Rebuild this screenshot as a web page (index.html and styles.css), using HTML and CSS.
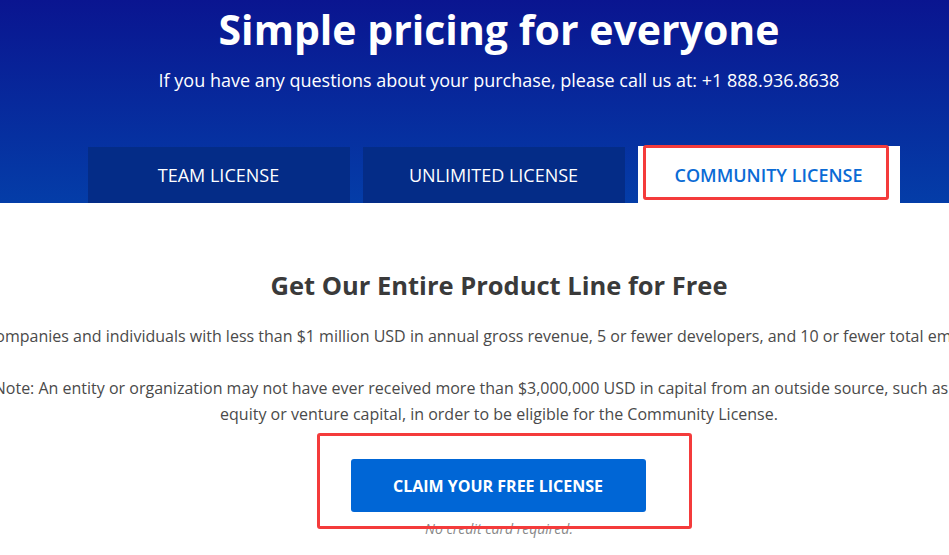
FILE: index.html
```html
<!DOCTYPE html>
<html>

<head>
  <meta charset="UTF-8">
  <meta name="viewport" content="width=device-width, initial-scale=1.0">
  <title>Pricing - Community License</title>
  <link rel="stylesheet" href="styles.css">
</head>

<body>
  <div class="page">
    <header class="hero">
      <h1>Simple pricing for everyone</h1>
      <p class="hero-sub">If you have any questions about your purchase, please call us at: +1 888.936.8638</p>

      <nav class="tabs">
        <a class="tab">TEAM LICENSE</a>
        <a class="tab">UNLIMITED LICENSE</a>
        <a class="tab active">COMMUNITY LICENSE<span class="mark mark-tab"></span></a>
      </nav>
    </header>

    <section class="community">
      <h2>Get Our Entire Product Line for Free</h2>
      <p>Companies and individuals with less than $1 million USD in annual gross revenue, 5 or fewer developers, and 10 or fewer total employees.</p>
      <p>Note: An entity or organization may not have ever received more than $3,000,000 USD in capital from an outside source, such as private equity or venture capital, in order to be eligible for the Community License.</p>

      <div class="cta">
        <a class="btn">CLAIM YOUR FREE LICENSE</a>
        <span class="mark mark-cta"></span>
      </div>
      <p class="note">No credit card required.</p>
    </section>
  </div>
</body>

</html>
```

FILE: styles.css
```css
html,
body {
  margin: 0;
  overflow: hidden;
  background: white;
}

body {
  font-family: "Open Sans", sans-serif;
}

.page {
  width: 1040px;
  margin-left: -21px;
}

/* header */

.hero {
  background: linear-gradient(180deg, #0a1590 0%, #043da8 100%);
  color: white;
  text-align: center;
  padding-top: 1px;
}

.hero h1 {
  margin: 0;
  padding-top: 3px;
  font-size: 41px;
  font-weight: 700;
  line-height: 50px;
}

.hero-sub {
  margin: 13px 0 0;
  font-size: 18px;
  line-height: 26px;
}

.tabs {
  display: flex;
  justify-content: center;
  gap: 13px;
  margin-top: 53px;
  padding-right: 11px;
  align-items: flex-end;
}

.tab {
  position: relative;
  width: 262px;
  height: 56px;
  display: flex;
  align-items: center;
  justify-content: center;
  background: #042c87;
  color: white;
  font-size: 18px;
  text-decoration: none;
}

.tab.active {
  height: 57px;
  background: white;
  color: #0a6bd5;
  font-weight: 600;
}

/* body */

.community {
  text-align: center;
  color: #4a4a4a;
  padding-top: 66px;
}

.community h2 {
  margin: 0 0 22px;
  font-size: 25.5px;
  font-weight: 700;
  color: #3a3a3a;
  line-height: 32px;
}

.community p {
  margin: 0 0 26px;
  font-size: 16px;
  line-height: 26px;
}

.cta {
  position: relative;
  display: flex;
  justify-content: center;
  padding-top: 6px;
  padding-right: 2px;
}

.btn {
  display: flex;
  align-items: center;
  justify-content: center;
  width: 295px;
  height: 53px;
  background: #0066d6;
  border-radius: 3px;
  color: white;
  font-size: 16px;
  font-weight: 700;
  text-decoration: none;
}

.community .note {
  margin: 4px 0 0;
  font-size: 14px;
  font-style: italic;
  color: #888;
}

/* red highlight boxes */

.mark {
  position: absolute;
  border: 3px solid #f43b3b;
  border-radius: 3px;
}

.mark-tab {
  left: 5px;
  right: 11px;
  top: -1px;
  bottom: 3px;
}

.mark-cta {
  left: 338px;
  width: 369px;
  top: -20px;
  height: 90px;
}
```
